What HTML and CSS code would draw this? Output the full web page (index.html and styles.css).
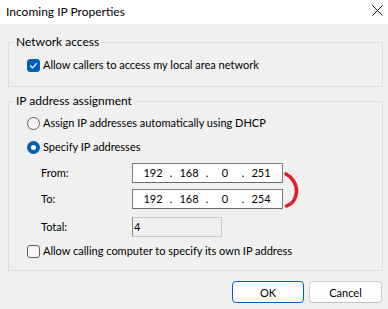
FILE: index.html
```html
<!DOCTYPE html>
<html>
<head>
<meta charset="utf-8">
<link rel="stylesheet" href="styles.css">
</head>
<body>
<div class="dialog">
  <div class="titlebar">
    <span class="title">Incoming IP Properties</span>
    <svg class="close" width="11" height="11" viewBox="0 0 11 11"><path d="M0.5 0.5 L10.5 10.5 M10.5 0.5 L0.5 10.5" stroke="#1a1a1a" stroke-width="1" fill="none"/></svg>
  </div>
  <div class="body">
    <fieldset class="group g1">
      <legend>Network access</legend>
      <div class="row check-row">
        <span class="checkbox checked"><svg width="13" height="13" viewBox="0 0 13 13"><path d="M3.5 6.8 L5.6 8.8 L9.6 4.4" stroke="#fff" stroke-width="1.2" fill="none" stroke-linecap="round" stroke-linejoin="round"/></svg></span>
        <span class="label">Allow callers to access my local area network</span>
      </div>
    </fieldset>
    <fieldset class="group g2">
      <legend>IP address assignment</legend>
      <div class="row radio-row r1">
        <span class="radio"></span>
        <span class="label">Assign IP addresses automatically using DHCP</span>
      </div>
      <div class="row radio-row r2">
        <span class="radio checked"></span>
        <span class="label">Specify IP addresses</span>
      </div>
      <div class="row field-row from">
        <span class="flabel">From:</span>
        <div class="ipbox"><span class="oct">192</span><span class="dot">.</span><span class="oct">168</span><span class="dot">.</span><span class="oct">0</span><span class="dot">.</span><span class="oct">251</span></div>
      </div>
      <div class="row field-row to">
        <span class="flabel">To:</span>
        <div class="ipbox"><span class="oct">192</span><span class="dot">.</span><span class="oct">168</span><span class="dot">.</span><span class="oct">0</span><span class="dot">.</span><span class="oct">254</span></div>
      </div>
      <div class="row field-row total">
        <span class="flabel">Total:</span>
        <div class="totalbox">4</div>
      </div>
      <div class="row check-row last">
        <span class="checkbox"></span>
        <span class="label">Allow calling computer to specify its own IP address</span>
      </div>
    </fieldset>
    <div class="buttons">
      <button class="btn default">OK</button>
      <button class="btn">Cancel</button>
    </div>
  </div>
  <svg class="mark" width="24" height="44" viewBox="0 0 24 44"><path d="M4 4 C 10 7, 15 14, 14.5 22 C 14 29, 10 34, 4.5 36" stroke="#e21f26" stroke-width="3.6" fill="none" stroke-linecap="round"/></svg>
</div>
</body>
</html>
```

FILE: styles.css
```css
* { box-sizing: border-box; }
html, body { margin: 0; padding: 0; }
body {
  width: 388px;
  height: 309px;
  overflow: hidden;
  background: #f0f0f0;
  font-family: Lato, "Noto Sans", sans-serif;
  font-size: 11px;
  color: #000;
}
.dialog { position: relative; width: 388px; height: 309px; }
.titlebar {
  height: 24px;
  background: #fff;
  display: flex;
  align-items: center;
  justify-content: space-between;
  padding: 0 5px 0 6px;
}
.title { font-size: 12px; line-height: 16px; margin-top: -1px; }
.close { margin-top: -4px; margin-right: 0; }
.body { display: flex; flex-direction: column; padding-top: 10px; }
.group {
  margin: 0 5px 0 8px;
  border: 1px solid #dcdcdc;
  padding: 0 0 0 18px;
  min-width: 0;
}
.group legend {
  padding: 0 2px;
  margin-left: -13px;
  line-height: 16px;
  height: 16px;
  font-size: 12px;
}
.g1 { padding-top: 7px; padding-bottom: 13px; }
.g2 { margin-top: 6px; padding-top: 6px; padding-bottom: 11px; }
.row { display: flex; align-items: center; }
.check-row, .radio-row { height: 16px; }
.label { margin-left: 3px; line-height: 16px; white-space: nowrap; }
.checkbox {
  width: 13px; height: 13px;
  border: 1px solid #5f5f5f;
  border-radius: 3px;
  background: #f7f7f7;
  display: block;
  flex: none;
}
.checkbox.checked { background: #005fb8; border-color: #005fb8; position: relative; }
.checkbox.checked svg { display: block; margin: -1px; }
.radio {
  width: 13px; height: 13px;
  border: 1px solid #5f5f5f;
  border-radius: 50%;
  background: #f7f7f7;
  flex: none;
}
.radio.checked {
  border: 4px solid #005fb8;
  background: #fff;
}
.r2 { margin-top: 8px; }
.field-row { height: 20px; }
.from { margin-top: 8px; }
.to { margin-top: 6px; }
.total { margin-top: 8px; }
.last { margin-top: 6px; }
.flabel { width: 105px; padding-left: 14px; line-height: 16px; }
.ipbox {
  width: 151px; height: 20px;
  border: 1px solid #7d7d7d;
  border-bottom-color: #6a6a6a;
  background: #fff;
  display: flex;
  align-items: center;
  padding-left: 4px;
}
.oct { width: 32px; text-align: center; line-height: 16px; }
.dot { width: 4px; text-align: center; line-height: 16px; }
.totalbox {
  width: 90px; height: 20px;
  border: 1px solid #cccccc;
  border-left-color: #8a8a8a;
  background: #f0f0f0;
  line-height: 17px;
  padding-left: 1px;
}
.buttons {
  display: flex;
  justify-content: flex-end;
  gap: 5px;
  margin-top: 10px;
  padding-right: 6px;
}
.btn {
  font-family: inherit;
  font-size: 11px;
  color: #000;
  height: 22px;
  width: 73px;
  border: 1px solid #d0d0d0;
  border-bottom-color: #c0c0c0;
  border-radius: 4px;
  background: #fdfdfd;
  padding: 0;
}
.btn.default { width: 72px; border: 1px solid #005fb8; }
.mark { position: absolute; left: 282px; top: 170px; }
```
